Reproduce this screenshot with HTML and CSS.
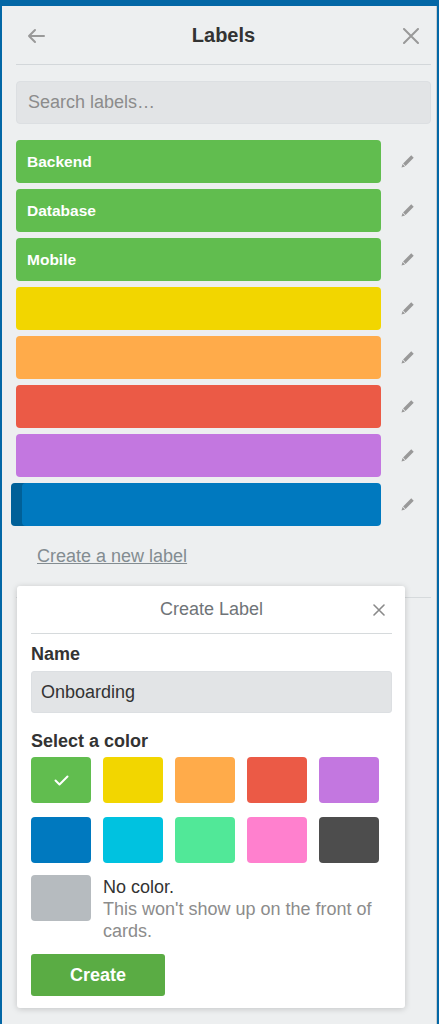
FILE: index.html
```html
<!DOCTYPE html>
<html lang="en">
<head>
<meta charset="utf-8">
<title>Labels</title>
<link rel="stylesheet" href="styles.css">
</head>
<body>
<div class="panel">
  <div class="header">
    <span class="icon-btn back">
      <svg width="20" height="16" viewBox="0 0 20 16"><path d="M18 8H3M9 2L3 8l6 6" fill="none" stroke="#999" stroke-width="2" stroke-linecap="round" stroke-linejoin="round"/></svg>
    </span>
    <h1 class="title">Labels</h1>
    <span class="icon-btn close">
      <svg width="16" height="16" viewBox="0 0 16 16"><path d="M1 1l14 14M15 1L1 15" fill="none" stroke="#999" stroke-width="2" stroke-linecap="round"/></svg>
    </span>
  </div>

  <input class="search" type="text" placeholder="Search labels…">

  <ul class="labels">
    <li class="row"><span class="label green">Backend</span><span class="edit"><svg width="15" height="15" viewBox="0 0 14 14"><path d="M10.5 1.2l2.3 2.3-7.6 7.6-2.3-2.3z M2.4 9.3l2.3 2.3-3.3 1z" fill="#999"/></svg></span></li>
    <li class="row"><span class="label green">Database</span><span class="edit"><svg width="15" height="15" viewBox="0 0 14 14"><path d="M10.5 1.2l2.3 2.3-7.6 7.6-2.3-2.3z M2.4 9.3l2.3 2.3-3.3 1z" fill="#999"/></svg></span></li>
    <li class="row"><span class="label green">Mobile</span><span class="edit"><svg width="15" height="15" viewBox="0 0 14 14"><path d="M10.5 1.2l2.3 2.3-7.6 7.6-2.3-2.3z M2.4 9.3l2.3 2.3-3.3 1z" fill="#999"/></svg></span></li>
    <li class="row"><span class="label yellow"></span><span class="edit"><svg width="15" height="15" viewBox="0 0 14 14"><path d="M10.5 1.2l2.3 2.3-7.6 7.6-2.3-2.3z M2.4 9.3l2.3 2.3-3.3 1z" fill="#999"/></svg></span></li>
    <li class="row"><span class="label orange"></span><span class="edit"><svg width="15" height="15" viewBox="0 0 14 14"><path d="M10.5 1.2l2.3 2.3-7.6 7.6-2.3-2.3z M2.4 9.3l2.3 2.3-3.3 1z" fill="#999"/></svg></span></li>
    <li class="row"><span class="label red"></span><span class="edit"><svg width="15" height="15" viewBox="0 0 14 14"><path d="M10.5 1.2l2.3 2.3-7.6 7.6-2.3-2.3z M2.4 9.3l2.3 2.3-3.3 1z" fill="#999"/></svg></span></li>
    <li class="row"><span class="label purple"></span><span class="edit"><svg width="15" height="15" viewBox="0 0 14 14"><path d="M10.5 1.2l2.3 2.3-7.6 7.6-2.3-2.3z M2.4 9.3l2.3 2.3-3.3 1z" fill="#999"/></svg></span></li>
    <li class="row hovered"><span class="label blue"></span><span class="edit"><svg width="15" height="15" viewBox="0 0 14 14"><path d="M10.5 1.2l2.3 2.3-7.6 7.6-2.3-2.3z M2.4 9.3l2.3 2.3-3.3 1z" fill="#999"/></svg></span></li>
  </ul>

  <a class="create-link" href="#">Create a new label</a>

  <div class="divider"></div>

  <div class="popover">
    <div class="pop-header">
      <span class="pop-title">Create Label</span>
      <span class="pop-close">
        <svg width="12" height="12" viewBox="0 0 12 12"><path d="M1 1l10 10M11 1L1 11" fill="none" stroke="#8a8a8a" stroke-width="1.6" stroke-linecap="round"/></svg>
      </span>
    </div>
    <div class="pop-body">
      <label class="field-label">Name</label>
      <input class="name-input" type="text" value="Onboarding">
      <div class="field-label color-label">Select a color</div>
      <div class="swatches">
        <span class="swatch green selected">
          <svg width="15" height="11" viewBox="0 0 15 11"><path d="M1.5 5.5l4 4 8-8" fill="none" stroke="#fff" stroke-width="2" stroke-linecap="round" stroke-linejoin="round"/></svg>
        </span>
        <span class="swatch yellow"></span>
        <span class="swatch orange"></span>
        <span class="swatch red"></span>
        <span class="swatch purple"></span>
        <span class="swatch blue"></span>
        <span class="swatch sky"></span>
        <span class="swatch lime"></span>
        <span class="swatch pink"></span>
        <span class="swatch black"></span>
      </div>
      <div class="no-color">
        <span class="swatch none"></span>
        <p class="no-color-text">No color.<span class="hint">This won't show up on the front of cards.</span></p>
      </div>
      <button class="create-btn" type="button">Create</button>
    </div>
  </div>
</div>
</body>
</html>
```

FILE: styles.css
```css
* { box-sizing: border-box; }

html, body {
  margin: 0;
  padding: 0;
}

body {
  background: #0367a6;
  font-family: "Liberation Sans", Arial, sans-serif;
  color: #333;
  width: 439px;
  height: 1024px;
  overflow: hidden;
}

.panel {
  position: relative;
  margin: 6px 2px 0 2px;
  height: 1018px;
  background: #edeff0;
  border-right: 1px solid #c8cdd0;
  padding: 0 5px 0 14px;
}

.header {
  display: grid;
  grid-template-columns: 40px 1fr 40px;
  align-items: center;
  height: 59px;
  padding-top: 1px;
  border-bottom: 1px solid #d3d7da;
}

.icon-btn {
  display: flex;
  align-items: center;
}

.back { padding-left: 10px; }
.close { justify-content: flex-end; padding-right: 12px; }

.title {
  margin: 0;
  text-align: center;
  font-size: 20px;
  font-weight: bold;
  color: #333;
}

.search {
  display: block;
  width: 100%;
  height: 43px;
  margin: 16px 0 0 0;
  padding: 0 11px;
  border: 1px solid #dcdfe2;
  border-radius: 4px;
  background: #e2e4e6;
  font-family: inherit;
  font-size: 18px;
  color: #333;
  outline: none;
}

.search::placeholder { color: #8c8c8c; }

.labels {
  list-style: none;
  margin: 16px 0 0 0;
  padding: 0;
  display: flex;
  flex-direction: column;
  gap: 6px;
}

.row {
  display: flex;
  align-items: center;
  height: 43px;
}

.label {
  display: block;
  width: 365px;
  height: 43px;
  border-radius: 4px;
  padding-left: 11px;
  line-height: 44px;
  font-size: 15.5px;
  font-weight: bold;
  color: #fff;
}

.row.hovered .label {
  margin-left: -5px;
  width: 370px;
  box-shadow: inset 11px 0 0 rgba(0, 0, 0, 0.2);
}

.edit {
  display: flex;
  margin-left: 19px;
}

.green { background: #61bd4f; }
.yellow { background: #f2d600; }
.orange { background: #ffab4a; }
.red { background: #eb5a46; }
.purple { background: #c377e0; }
.blue { background: #0079bf; }
.sky { background: #00c2e0; }
.lime { background: #51e898; }
.pink { background: #ff80ce; }
.black { background: #4d4d4d; }
.none { background: #b6bbbf; }

.create-link {
  display: inline-block;
  margin: 19px 0 0 21px;
  font-size: 18px;
  line-height: 22px;
  color: #838c91;
  text-decoration: underline;
}

.divider {
  margin-top: 30px;
  border-top: 1px solid #d6dadc;
}

.popover {
  position: absolute;
  left: 15px;
  top: 580px;
  width: 388px;
  background: #fff;
  border-radius: 3px;
  box-shadow: 0 1px 6px rgba(0, 0, 0, 0.18);
  padding: 0 13px 12px 14px;
}

.pop-header {
  position: relative;
  height: 48px;
  border-bottom: 1px solid #d6dadc;
  display: flex;
  align-items: center;
  justify-content: center;
}

.pop-title {
  font-size: 18px;
  color: #6f7478;
}

.pop-close {
  position: absolute;
  right: 7px;
  top: 18px;
  display: flex;
}

.pop-body {
  display: flex;
  flex-direction: column;
  align-items: flex-start;
}

.field-label {
  display: block;
  margin-top: 10px;
  font-size: 18px;
  line-height: 20px;
  font-weight: bold;
  color: #333;
}

.name-input {
  display: block;
  width: 100%;
  height: 42px;
  margin-top: 7px;
  padding: 0 9px;
  border: 1px solid #dcdfe2;
  border-radius: 3px;
  background: #e2e4e6;
  font-family: inherit;
  font-size: 18px;
  color: #333;
  outline: none;
}

.name-input.field-label { margin-top: 7px; }

.color-label { margin-top: 18px; }

.swatches {
  margin-top: 6px;
  display: grid;
  grid-template-columns: repeat(5, 60px);
  column-gap: 12px;
  row-gap: 14px;
}

.swatch {
  display: flex;
  align-items: center;
  justify-content: center;
  width: 60px;
  height: 46px;
  border-radius: 4px;
}

.no-color {
  margin-top: 12px;
  display: flex;
  align-items: flex-start;
  gap: 12px;
}

.no-color .swatch { flex: none; }

.no-color-text {
  margin: 1px 0 0 0;
  font-size: 18px;
  line-height: 22px;
  color: #333;
}

.hint {
  display: block;
  color: #8c8c8c;
}

.create-btn {
  margin-top: 12px;
  width: 134px;
  height: 42px;
  border: none;
  border-radius: 3px;
  background: #5aac44;
  color: #fff;
  font-family: inherit;
  font-size: 18px;
  font-weight: bold;
}
```
